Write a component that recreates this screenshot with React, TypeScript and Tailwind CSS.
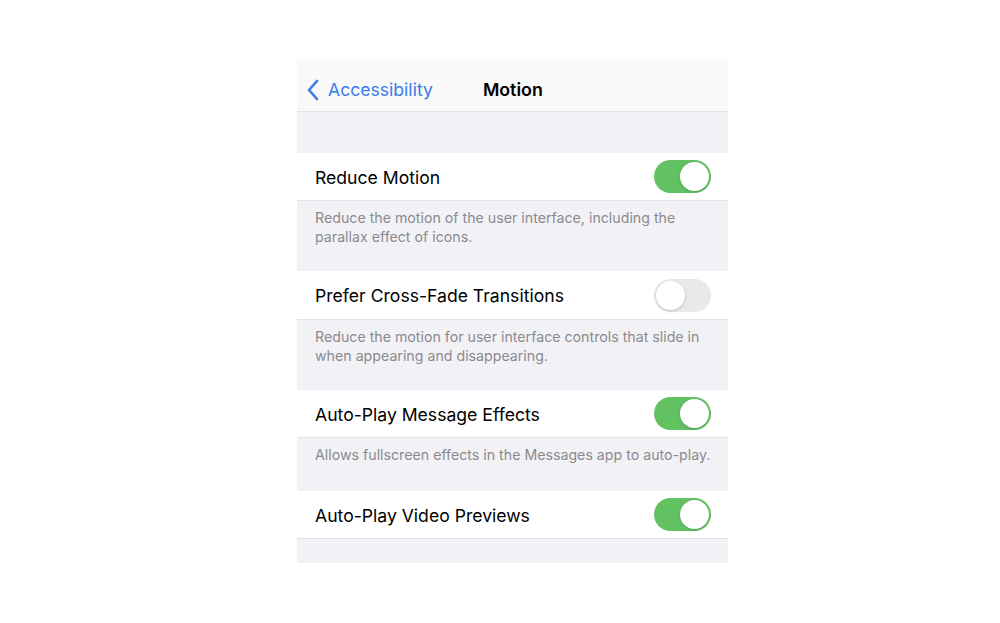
import React from "react";

function Toggle({ on }: { on: boolean }) {
  return (
    <div
      className={
        "relative h-[33px] w-[57px] rounded-full " +
        (on ? "bg-[#62c262]" : "bg-[#e9e9ea]")
      }
    >
      <div
        className={
          "absolute top-[2px] h-[29px] w-[29px] rounded-full bg-white shadow-[0_1px_3px_rgba(0,0,0,0.18)] " +
          (on ? "left-[26px]" : "left-[2px]")
        }
      />
    </div>
  );
}

function Row({ label, on, h }: { label: string; on: boolean; h: string }) {
  return (
    <div
      className={
        "flex items-center justify-between bg-white pl-[18px] pr-[17px] " + h
      }
    >
      <span className="mt-[3px] text-[17.6px] text-black">{label}</span>
      <Toggle on={on} />
    </div>
  );
}

function Footer({ text, h }: { text: React.ReactNode; h: string }) {
  return (
    <div
      className={
        "border-t border-[#e2e2e6] bg-[#f2f2f6] pl-[18px] pr-[12px] pt-[7px] text-[14.2px] leading-[19px] text-[#8a8a8e] " +
        h
      }
    >
      {text}
    </div>
  );
}

export default function App() {
  return (
    <div
      className="min-h-[623px] w-[1000px] bg-white pl-[297px] pt-[59px]"
      style={{ fontFamily: "Inter, 'Noto Sans', sans-serif" }}
    >
      <div className="w-[431px]">
        <div className="relative flex h-[53px] items-center border-b border-[#e4e4e6] bg-[#f9f9f9] pt-[10px]">
          <div className="flex items-center pl-[9px] text-[#3a7bea]">
            <svg width="14" height="22" viewBox="0 0 14 22" fill="none">
              <path
                d="M11 2 L3 11 L11 20"
                stroke="#3a7bea"
                strokeWidth="2.6"
                strokeLinecap="round"
                strokeLinejoin="round"
              />
            </svg>
            <span className="ml-[8px] text-[17.6px]">Accessibility</span>
          </div>
          <span className="ml-[50px] text-[17.8px] font-semibold text-black">
            Motion
          </span>
        </div>
        <div className="h-[41px] bg-[#f2f2f6]" />
        <Row label="Reduce Motion" on={true} h="h-[47px]" />
        <Footer
          h="h-[71px]"
          text={
            <>
              Reduce the motion of the user interface, including the
              <br />
              parallax effect of icons.
            </>
          }
        />
        <Row label="Prefer Cross-Fade Transitions" on={false} h="h-[48px]" />
        <Footer
          h="h-[71px]"
          text={
            <>
              Reduce the motion for user interface controls that slide in
              <br />
              when appearing and disappearing.
            </>
          }
        />
        <Row label="Auto-Play Message Effects" on={true} h="h-[47px]" />
        <Footer
          h="h-[54px]"
          text="Allows fullscreen effects in the Messages app to auto-play."
        />
        <Row label="Auto-Play Video Previews" on={true} h="h-[47px]" />
        <div className="h-[25px] border-t border-[#e2e2e6] bg-[#f2f2f6]" />
      </div>
    </div>
  );
}
